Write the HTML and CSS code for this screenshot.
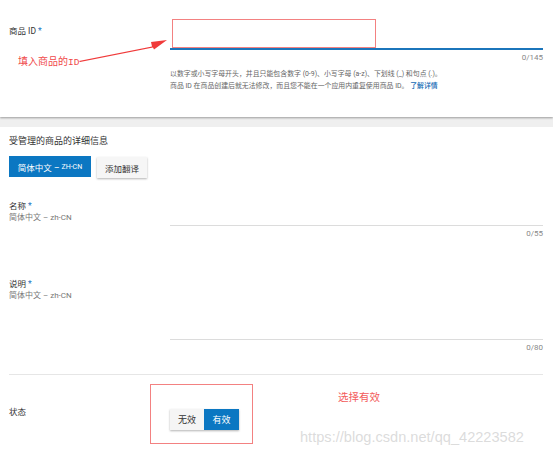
FILE: index.html
```html
<!DOCTYPE html>
<html lang="zh-CN">
<head>
<meta charset="utf-8">
<title>商品</title>
<link rel="stylesheet" href="styles.css">
</head>
<body>
<div class="page">
  <section class="card card-top">
    <div class="row">
      <div class="label-col"><span class="label">商品 ID <span class="req">*</span></span></div>
      <div class="field-col">
        <div class="id-input"></div>
        <div class="counter">0/145</div>
        <p class="help">以数字或小写字母开头，并且只能包含数字 (0-9)、小写字母 (a-z)、下划线 (_) 和句点 (.)。<br>商品 ID 在商品创建后就无法修改，而且您不能在一个应用内重复使用商品 ID。 <a class="link">了解详情</a></p>
      </div>
    </div>
    <div class="mark-box mark-id"></div>
    <div class="note note-id">填入商品的<span class="mono">ID</span></div>
    <svg class="arrow" width="100" height="30" viewBox="0 0 100 30">
      <polygon points="0,24 73,9.5 72,5 88,3 75,12.5 74,10.5 1,25" fill="#f03a3a"/>
    </svg>
  </section>

  <section class="card card-main">
    <h2 class="title">受管理的商品的详细信息</h2>
    <div class="btns">
      <button class="btn btn-primary">简体中文 – <span class="small">ZH-CN</span></button>
      <button class="btn btn-plain">添加翻译</button>
    </div>

    <div class="row row-name">
      <div class="label-col">
        <div class="label">名称 <span class="req">*</span></div>
        <div class="sub">简体中文 – zh-CN</div>
      </div>
      <div class="field-col">
        <div class="text-field tf-name"></div>
        <div class="counter">0/55</div>
      </div>
    </div>

    <div class="row row-desc">
      <div class="label-col">
        <div class="label">说明 <span class="req">*</span></div>
        <div class="sub">简体中文 – zh-CN</div>
      </div>
      <div class="field-col">
        <div class="text-field tf-desc"></div>
        <div class="counter">0/80</div>
      </div>
    </div>

    <hr class="divider">

    <div class="row row-status">
      <div class="label-col"><div class="label">状态</div></div>
      <div class="field-col">
        <div class="toggle">
          <span class="opt">无效</span><span class="opt opt-on">有效</span>
        </div>
      </div>
    </div>

    <div class="mark-box mark-status"></div>
    <div class="note note-status">选择有效</div>
    <div class="watermark">https://blog.csdn.net/qq_42223582</div>
  </section>
</div>
</body>
</html>
```

FILE: styles.css
```css
* { box-sizing: border-box; }
html, body { margin: 0; padding: 0; }
body {
  background: #efefef;
  font-family: Roboto, "Noto Sans CJK SC", sans-serif;
  color: #333;
  width: 553px;
  height: 457px;
  overflow: hidden;
}
.page { display: flex; flex-direction: column; gap: 10px; }

.card { background: #fff; position: relative; padding-left: 9px; padding-right: 10px; }
.card-top { height: 117px; padding-top: 19px; box-shadow: 0 1px 2px rgba(0,0,0,0.35); }
.card-main { height: 330px; padding-top: 8px; }

.row { display: flex; }
.label-col { width: 161px; flex: none; }
.field-col { flex: 1; display: flex; flex-direction: column; }

.label { font-size: 8.5px; line-height: 11px; color: #333; }
.card-top .label { display: block; margin-top: 7px; }
.req { color: #1a73c0; }
.sub { font-size: 8px; line-height: 11px; color: #777; margin-top: 0; }

.id-input { height: 31px; border-bottom: 2px solid #1b75bb; }
.counter { text-align: right; font-size: 8px; line-height: 10px; color: #888; margin-top: 3px; }
.help { margin: 5px 0 0; font-size: 6.9px; line-height: 12px; color: #666; white-space: nowrap; }
.link { color: #1469b4; font-weight: 500; }

.title { margin: 0; font-size: 9px; font-weight: normal; line-height: 12px; color: #333; }
.btns { display: flex; gap: 6px; margin-top: 9px; align-items: flex-start; }
.btn {
  border: none; height: 21px; padding: 0; font-family: inherit; font-size: 8.5px; cursor: pointer;
  display: flex; align-items: center; justify-content: center;
}
.btn-primary { width: 82px; background: #0b77c2; color: #fff; }
.btn-primary .small { font-size: 7px; margin-left: 2px; }
.btn-plain { width: 50px; margin-top: 1px; background: #f6f6f6; color: #333; box-shadow: 0 1px 2px rgba(0,0,0,0.3); }

.row-name { margin-top: 23px; }
.text-field { border-bottom: 1px solid #dcdcdc; }
.tf-name { height: 25px; }
.row-desc { margin-top: 40px; }
.tf-desc { height: 61px; }

.divider { border: none; border-top: 1px solid #e6e6e6; margin: 21px 0 0; }

.row-status { margin-top: 32px; }
.row-status .label { margin-top: 0; font-size: 8.5px; }
.toggle { display: flex; width: 69px; height: 21px; margin-top: 2px; box-shadow: 0 1px 2px rgba(0,0,0,0.3); }
.opt { width: 34px; display: flex; align-items: center; justify-content: center; font-size: 9px; background: #f5f5f5; color: #333; }
.opt-on { width: 35px; background: #0b77c2; color: #fff; }

.mark-box { position: absolute; border: 1px solid #f38181; }
.mark-id { left: 172px; top: 19px; width: 204px; height: 29px; }
.mark-status { left: 150px; top: 257px; width: 103px; height: 60px; }

.note { position: absolute; color: #f04a4a; font-size: 10px; line-height: 12px; white-space: nowrap; }
.note .mono { font-family: "Liberation Mono", monospace; font-size: 9.5px; }
.note-id { left: 18px; top: 56px; }
.note-status { left: 338px; top: 265px; font-size: 10.5px; color: #f35b5b; }

.arrow { position: absolute; left: 79px; top: 37px; }

.watermark {
  position: absolute; left: 300px; top: 301px; font-family: "Liberation Sans", Arial, sans-serif;
  font-size: 14.6px; line-height: 18px; color: rgba(190,190,190,0.55); white-space: nowrap;
}
```
